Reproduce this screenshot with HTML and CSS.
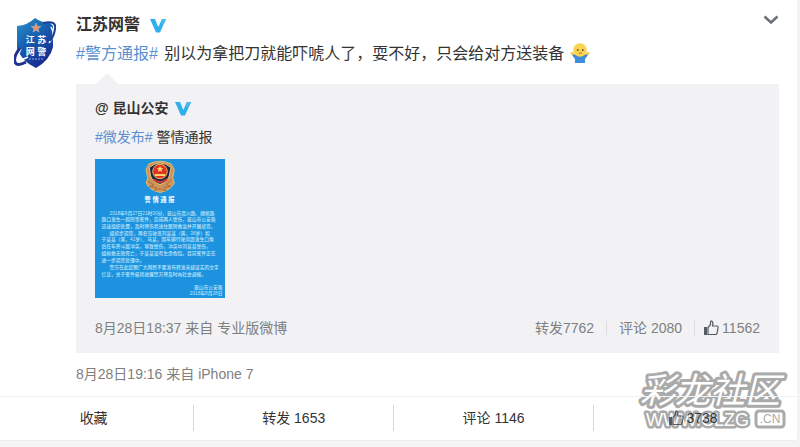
FILE: index.html
```html
<!DOCTYPE html>
<html lang="zh-CN">
<head>
<meta charset="utf-8">
<title>江苏网警的微博</title>
<link rel="stylesheet" href="styles.css">
</head>
<body>
<svg class="defs" aria-hidden="true">
  <symbol id="vmark" viewBox="0 0 16 15"><path fill="#2fb0ee" d="M0 1H5L8.300 9 12 1H16L10 14.500H6Z"/><path fill="#45b9f0" d="M12 1H16L13.500 6.500 10.500 4.500Z"/></symbol>
  <symbol id="thumb" viewBox="0 0 15 16"><path fill="currentColor" d="M0 7H3V15H0Z"/><path fill="none" stroke="currentColor" stroke-width="1.200" stroke-linejoin="round" d="M4 7.500 6.500 4.500V1.500Q7 .6 8 1.200 9.500 2.500 8.500 6H13Q14.300 6.200 14 7.800L13 13.500Q12.700 14.500 11.500 14.500H4Z"/></symbol>
</svg>
<article class="card">
  <div class="post">
    <a class="avatar" href="#" aria-label="江苏网警">
      <svg viewBox="0 0 42 50">
        <defs><linearGradient id="shield" x1="0" y1="0" x2=".6" y2="1"><stop offset="0" stop-color="#2e93c8"/><stop offset=".45" stop-color="#1763b3"/><stop offset="1" stop-color="#182a91"/></linearGradient></defs>
        <path fill="url(#shield)" d="M21 0Q28 5 36 5L39 8V29Q36 42 22 50 7 43 3 30V8Q14 7 21 0Z"/>
        <path fill="none" stroke="#fff" stroke-width="1.500" d="M37 9Q42 17 35 25M7 31Q3 38 5 42 9 42 14 39"/>
        <path fill="none" stroke="#1b3f94" stroke-width="2" d="M29 5Q43 2 41 11 40 18 36 23"/>
        <path fill="none" stroke="#22338f" stroke-width="3" d="M6 30Q-1 39 1 44 3 49 12 44"/>
        <path fill="#e7936e" stroke="#a7c0cf" stroke-width=".5" d="m22 5 1.300 3.200 3.700.2-2.900 2.300 1 3.500-3.100-2-3 2 1-3.500L17 8.400l3.800-.2z"/>
        <text class="avatar-text" x="22" y="25">江 苏</text>
        <text class="avatar-text" x="22" y="37">网 警</text>
        <path stroke="#8eabd7" stroke-dasharray="2 1" d="M15 41H30"/>
      </svg>
    </a>
    <div class="content">
      <header class="head">
        <a class="name" href="#">江苏网警</a><svg class="verified"><use href="#vmark"/></svg>
        <button class="more" aria-label="更多"><svg viewBox="0 0 16 10"><path fill="none" stroke="#696e78" stroke-width="2.500" d="m1.500 1.500 6.500 6 6.500-6"/></svg></button>
      </header>
      <p class="message"><a href="#">#警方通报#</a> 别以为拿把刀就能吓唬人了，耍不好，只会给对方送装备<svg class="shrug" viewBox="0 0 20 20" role="img" aria-label="摊手"><path fill="#f7c63e" d="m0 10 2-1 4 3 1 3-3-1-3-3zM20 10l-2-1-4 3-1 3 3-1 3-3z"/><path fill="#3b8ed7" d="M2 12Q10 10 18 12L15 16V20H5V16Z"/><circle cx="10" cy="7" r="6.800" fill="#fbd34f"/><path fill="#76552a" d="M7 6h1.500v2H7zM12 6h1.500v2H12z"/><path fill="none" stroke="#b06f2d" d="M9 10.500Q11 9 12 10.500"/></svg></p>
      <section class="quote">
        <div class="quote-head"><a class="quote-name" href="#">@ 昆山公安</a><svg class="verified"><use href="#vmark"/></svg></div>
        <p class="quote-text"><a href="#">#微发布#</a> 警情通报</p>
        <a class="poster" href="#" aria-label="警情通报">
          <svg viewBox="0 0 520 556">
            <rect width="520" height="556" fill="#1d93df"/>
            <path fill="#cf9556" stroke="#e1b97b" stroke-width="4" d="M215 20Q260-2 305 20L317 43 311 74 317 96Q305 124 260 134 216 124 205 96L211 74 204 43Z"/>
            <path fill="none" stroke="#9d6336" stroke-width="3" d="m212 88 23 16-19 7 30 3-8 12 23-8 23 10-8-15 27-3-18-8 22-20"/>
            <path fill="#18294e" stroke="#eac37a" stroke-width="4" d="M217 34Q260-2 304 34L297 68Q286 95 260 102 232 93 222 68Z"/>
            <circle cx="260" cy="50" r="29" fill="#df3324" stroke="#efba58" stroke-width="4"/>
            <path fill="#ffd36b" d="m260 28 4 8 9 1-7 6 2 9-8-5-8 5 2-9-7-6 9-1zM239 60h42v8h-42z"/>
            <path stroke="#d23a2e" stroke-width="9" d="M233 81Q260 104 288 81" fill="none"/>
            <text class="poster-title" x="258" y="171">警 情 通 报</text>
            <g class="poster-copy">
              <text x="58" y="222">2018年8月27日21时30分，昆山市震川路、顺帆路</text>
              <text x="26" y="248">路口发生一起刑事案件，造成两人受伤，昆山市公安局</text>
              <text x="26" y="275">迅速组织处置，及时将伤者送往医院救治并开展侦查。</text>
              <text x="58" y="302">经初步调查，两名驾驶员刘某某（男，36岁）和</text>
              <text x="26" y="329">于某某（男，41岁）、马某，因车辆行驶问题发生口角</text>
              <text x="26" y="356">后在车旁斗殴冲突，导致受伤，冲突中刘某某受伤，</text>
              <text x="26" y="383">经抢救无效死亡，于某某没有生命危险。目前案件正在</text>
              <text x="26" y="411">进一步调查处理中。</text>
              <text x="58" y="439">警方在此提醒广大网民不要发布转发未经证实的文字</text>
              <text x="26" y="467">信息，关于案件最新进展警方将及时向社会通报。</text>
              <text class="sign" x="510" y="518">昆山市公安局</text>
              <text class="sign" x="510" y="544">2018年8月28日</text>
            </g>
          </svg>
        </a>
        <footer class="quote-foot">
          <span>8月28日18:37 来自 专业版微博</span>
          <nav class="stats"><a href="#">转发7762</a><a href="#">评论 2080</a><a href="#" class="like" aria-label="赞 11562"><svg class="thumb"><use href="#thumb"/></svg>11562</a></nav>
        </footer>
      </section>
      <p class="time">8月28日19:16 来自 iPhone 7</p>
    </div>
  </div>
  <svg class="watermark" viewBox="0 0 156 68">
    <text class="mark-title" x="5" y="35">彩龙社区</text>
    <text class="mark-url" x="11" y="58">WWW.CLZG</text>
    <rect x="121" y="43" width="28" height="16" rx="3" fill="#fff" stroke="#aaa" stroke-width="3"/>
    <text class="mark-cn" x="135" y="55">.CN</text>
  </svg>
  <nav class="actions">
    <button>收藏</button><button>转发 1653</button><button>评论 1146</button><button aria-label="赞 3738"><svg class="thumb"><use href="#thumb"/></svg>3738</button>
  </nav>
</article>
</body>
</html>
```
FILE: styles.css
```css
* { box-sizing: border-box; }
body {
  margin: 0;
  background: #f4f4f5;
  color: #333;
  font: 14px/20px "Liberation Sans", "Noto Sans CJK SC", sans-serif;
}
p { margin: 0; }
a { color: inherit; text-decoration: none; }
button { padding: 0; border: 0; background: none; color: inherit; font: inherit; cursor: pointer; }
svg { display: block; }
.defs { position: absolute; width: 0; height: 0; }
.card {
  position: relative;
  margin-right: 3px;
  background: #fff;
  border-bottom: 1px solid #ececec;
  border-radius: 0 0 3px 0;
}
.post { display: flex; gap: 20px; padding: 12px 18px 12px 14px; }
.avatar { flex: none; width: 42px; padding-top: 6px; }
.avatar-text { fill: #fff; font-size: 9px; font-weight: bold; text-anchor: middle; }
.content { flex: 1; min-width: 0; }
.head { display: flex; align-items: center; gap: 10px; height: 26px; }
.name { font-size: 16px; font-weight: bold; }
.verified { width: 16px; height: 15px; }
.more { margin-left: auto; align-self: flex-start; }
.more svg { width: 16px; height: 10px; margin-top: 3px; }
.message { padding-top: 3px; font-size: 16px; line-height: 26px; }
.message a, .quote-text a { color: #5b8fd0; }
.message a { margin-right: 2px; }
.shrug { display: inline-block; width: 20px; height: 20px; margin-left: 6px; vertical-align: -4px; }
.quote {
  position: relative;
  margin-top: 17px;
  padding: 14px 19px 15px;
  background: #f2f2f5;
}
.quote::before {
  content: "";
  position: absolute;
  left: 20px;
  top: -11px;
  border: solid transparent;
  border-width: 0 11px 11px;
  border-bottom-color: #f2f2f5;
}
.quote-head { display: flex; align-items: center; gap: 6px; }
.quote-name { font-weight: bold; }
.quote-text { padding-top: 9px; }
.poster { display: block; width: 130px; margin-top: 12px; }
.poster svg { width: 100%; }
.poster-title { fill: #fff; font-size: 25px; font-weight: bold; text-anchor: middle; }
.poster-copy { fill: #bce4fb; font-size: 19px; font-weight: 500; }
.sign { text-anchor: end; }
.quote-foot { display: flex; justify-content: space-between; margin-top: 20px; color: #808080; }
.stats { display: flex; align-items: center; }
.stats a { line-height: 14px; }
.stats a + a { margin-left: 12px; padding-left: 12px; border-left: 1px solid #ddd; }
.stats a.like { display: flex; align-items: center; gap: 2px; padding-left: 9px; }
.like .thumb { margin-right: 1px; }
.thumb { width: 15px; height: 16px; color: #555b64; }
.time { padding-top: 11px; color: #808080; }
.actions {
  position: relative;
  display: grid;
  grid-template-columns: calc(25% - 5px) repeat(3, 1fr);
  padding: 8px 4px 9px 0;
  border-top: 1px solid #f2f2f5;
}
.actions button {
  display: flex;
  align-items: center;
  justify-content: center;
  gap: 2px;
  height: 26px;
  white-space: pre;
}
.actions button:first-child { padding-right: 6px; }
.actions button + button { border-left: 1px solid #d9d9d9; }
.watermark { position: absolute; right: 6px; bottom: 4px; width: 156px; height: 68px; pointer-events: none; }
.watermark text { paint-order: stroke; stroke: #aaa; fill: #fff; stroke-linejoin: round; }
.mark-title { font-size: 35px; font-style: italic; stroke-width: 6px; }
.mark-url { font: 18px "Liberation Sans", sans-serif; stroke-width: 5px; }
.watermark .mark-cn { fill: #aaa; stroke: none; font-size: 12px; text-anchor: middle; }
```
